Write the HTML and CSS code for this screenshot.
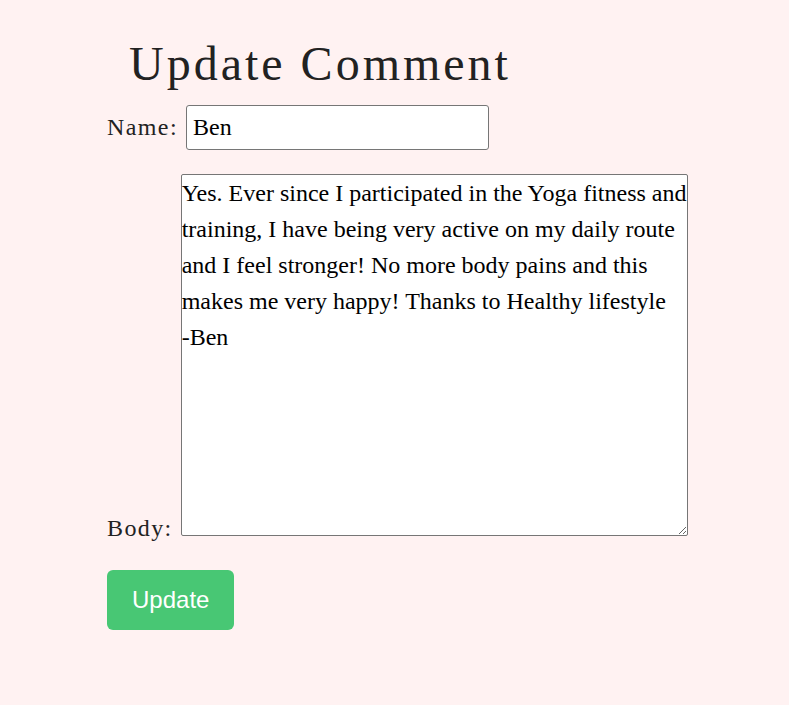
FILE: index.html
```html
<!DOCTYPE html>
<html lang="en">
<head>
<meta charset="utf-8">
<title>Update Comment</title>
<link rel="stylesheet" href="styles.css">
</head>
<body>
<main class="page">
  <h1 class="title">Update Comment</h1>
  <form class="form">
    <div class="row">
      <label class="label" for="name">Name:</label>
      <input class="name-input" id="name" type="text" value="Ben">
    </div>
    <div class="row row-body">
      <label class="label" for="body">Body:</label>
      <textarea class="body-input" id="body">Yes. Ever since I participated in the Yoga fitness and training, I have being very active on my daily route and I feel stronger! No more body pains and this makes me very happy! Thanks to Healthy lifestyle
-Ben</textarea>
    </div>
    <button class="btn" type="button">Update</button>
  </form>
</main>
</body>
</html>
```

FILE: styles.css
```css
html, body {
  margin: 0;
  background: #fff2f2;
}
body {
  font-family: "Liberation Serif", "Times New Roman", serif;
  color: #222;
}
.page {
  padding: 36px 0 0 107px;
}
.title {
  margin: 0 0 14px 22px;
  font-size: 48px;
  font-weight: normal;
  letter-spacing: 3px;
  line-height: normal;
  color: #222;
}
.row {
  display: block;
}
.row-body {
  margin-top: 24px;
}
.label {
  font-size: 24px;
  letter-spacing: 1.4px;
  color: #222;
}
.name-input {
  box-sizing: border-box;
  width: 303px;
  height: 45px;
  margin: 0 0 0 4px;
  padding: 0 6px;
  font-family: "Liberation Serif", "Times New Roman", serif;
  font-size: 24px;
  color: #000;
  background: #fff;
  border: 1px solid #767676;
  border-radius: 3px;
}
.body-input {
  box-sizing: border-box;
  width: 507px;
  height: 362px;
  margin: 0 0 0 4px;
  padding: 0;
  font-family: "Liberation Serif", "Times New Roman", serif;
  font-size: 24px;
  line-height: 36px;
  color: #000;
  background: #fff;
  border: 1px solid #767676;
  border-radius: 2px;
  vertical-align: baseline;
}
.btn {
  display: block;
  margin-top: 28px;
  height: 60px;
  padding: 0 25px;
  font-family: "Liberation Sans", Arial, sans-serif;
  font-size: 24px;
  color: #fff;
  background: #48c774;
  border: none;
  border-radius: 6px;
}
```
